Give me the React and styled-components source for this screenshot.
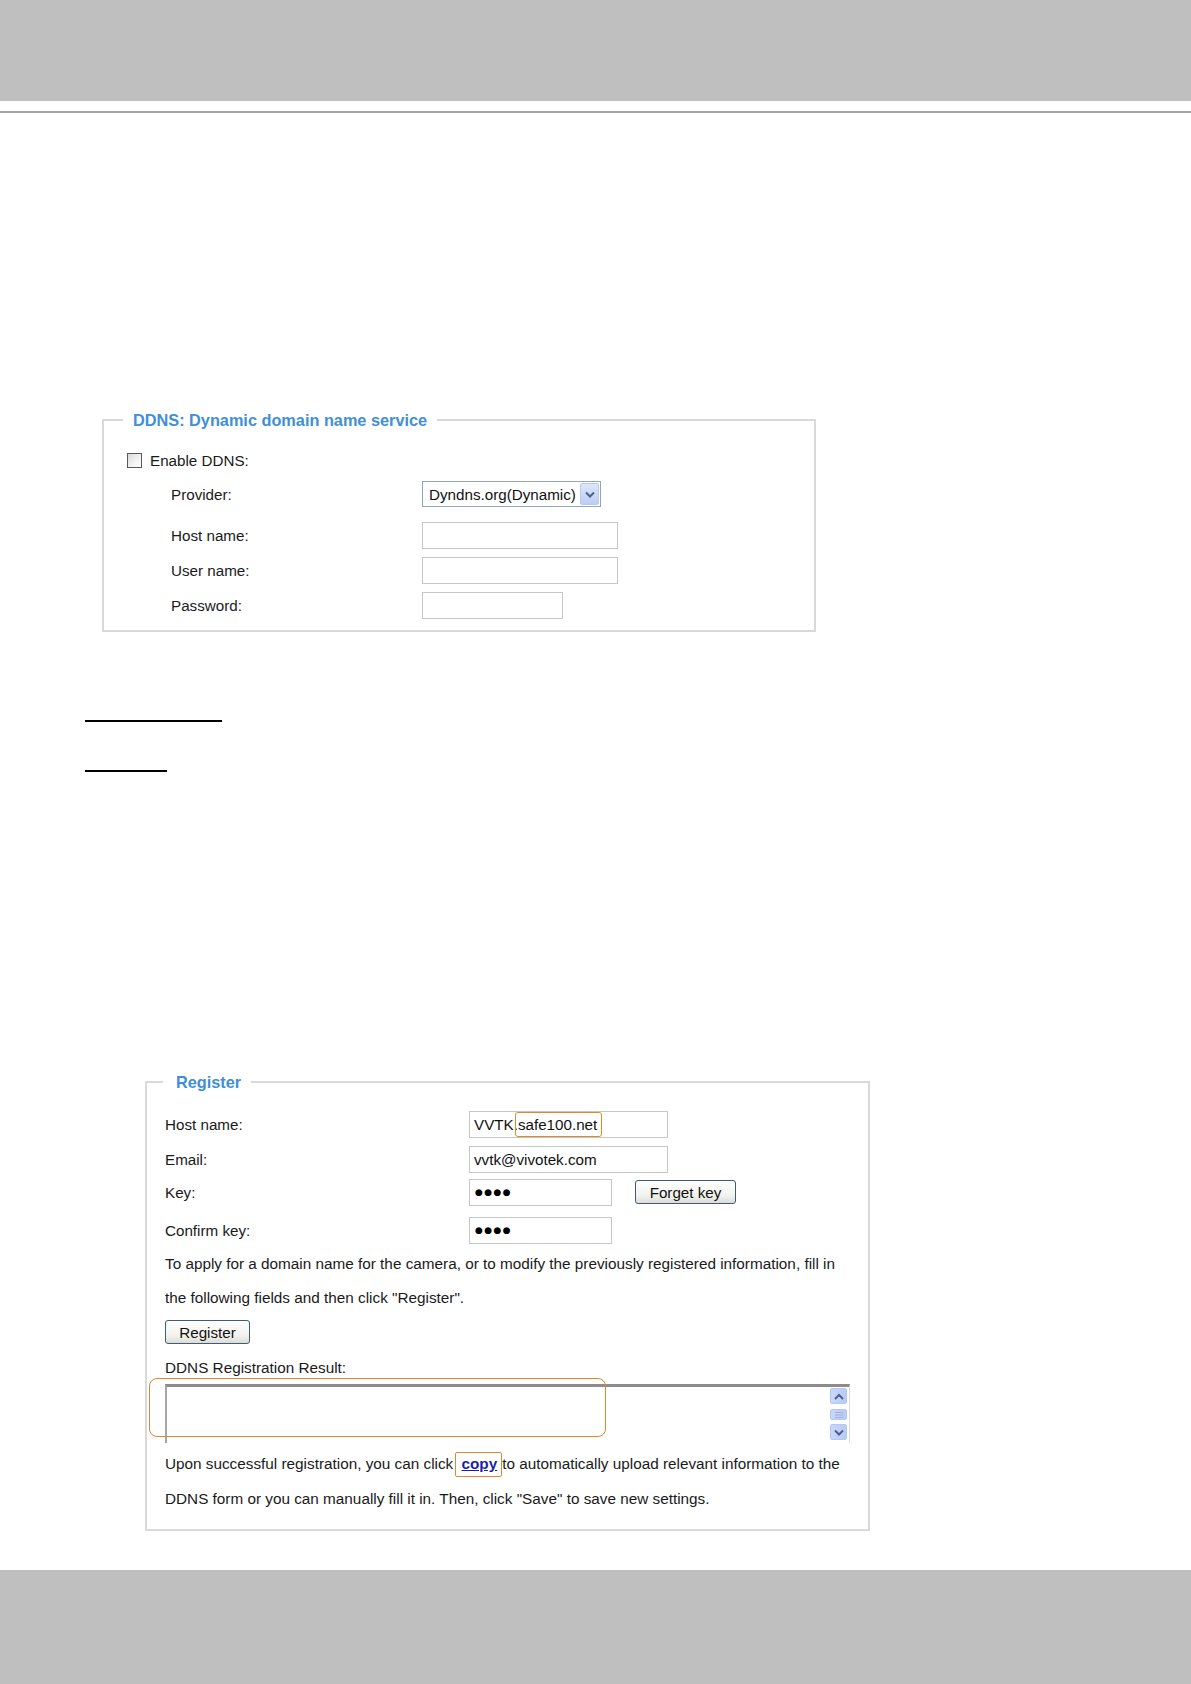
import React from 'react';
import styled, { createGlobalStyle } from 'styled-components';

const GlobalStyle = createGlobalStyle`
	html, body {
		margin: 0;
		padding: 0;
		background: #fff;
	}
	body {
		font-family: "Liberation Sans", Arial, sans-serif;
		color: #1a1a1a;
	}
`;

const Page = styled.div`
	width: 1191px;
	min-height: 1684px;
	display: flex;
	flex-direction: column;
	overflow: hidden;
`;

const Band = styled.div`
	height: ${p => p.$height}px;
	background: #bfbfbf;
	flex-shrink: 0;
`;

const Footer = styled(Band)`
	margin-top: auto;
`;

const Rule = styled.div`
	margin-top: 10px;
	border-top: 2px solid #a3a3a3;
`;

const Fieldset = styled.fieldset`
	box-sizing: border-box;
	min-width: 0;
	width: ${p => p.$width}px;
	margin: ${p => p.$top}px 0 0 ${p => p.$left}px;
	padding: ${p => p.$padTop}px 0 ${p => p.$padBottom}px 0;
	border: 2px solid #d9d9d9;
`;

const Legend = styled.legend`
	margin-left: ${p => p.$indent}px;
	padding: 0 10px 0 ${p => p.$padLeft}px;
	font-size: 16.3px;
	line-height: 20px;
	font-weight: bold;
	color: #3f8fd8;
`;

const CheckRow = styled.label`
	display: flex;
	align-items: center;
	gap: 8px;
	height: 34px;
	padding-left: 23px;
	font-size: 15.2px;
`;

const CheckBox = styled.span`
	box-sizing: border-box;
	width: 15px;
	height: 15px;
	border: 1px solid #55595e;
	background: linear-gradient(135deg, #d9d9d9 0%, #f4f4f4 60%, #ffffff 100%);
`;

const FieldRow = styled.div`
	display: grid;
	grid-template-columns: ${p => p.$labelWidth}px auto;
	align-items: center;
	height: ${p => p.$height}px;
	margin-top: ${p => p.$gap || 0}px;
	padding-left: ${p => p.$indent}px;
	font-size: 15.2px;
`;

const Cell = styled.div`
	display: flex;
	align-items: center;
	gap: 23px;
`;

const TextBox = styled.div`
	box-sizing: border-box;
	width: ${p => p.$width}px;
	height: 27px;
	border: 1px solid #c6c6c6;
	background: #fff;
	padding-left: 4px;
	display: flex;
	align-items: center;
	font-size: 15.2px;
	color: #111;
	white-space: nowrap;
`;

const Dots = styled.span`
	font-family: "DejaVu Sans", sans-serif;
	font-size: 9px;
	letter-spacing: 1.4px;
	color: #000;
	padding-left: 1px;
`;

const Marked = styled.span`
	display: inline-flex;
	align-items: center;
	box-sizing: border-box;
	height: 25px;
	margin-left: -3px;
	padding: 0 4px 0 2px;
	border: 1.5px solid #e0892c;
	border-radius: 3px;
`;

const SelectBox = styled.div`
	box-sizing: border-box;
	width: 179px;
	height: 26px;
	border: 1px solid #93a6ba;
	display: flex;
	align-items: center;
	justify-content: space-between;
	padding: 0 1px 0 6px;
	font-size: 15.2px;
	color: #111;
`;

const DropButton = styled.span`
	box-sizing: border-box;
	width: 19px;
	height: 22px;
	border: 1px solid #b9c9ea;
	border-radius: 2px;
	background: linear-gradient(#dde7fb, #bccdf3);
	display: flex;
	align-items: center;
	justify-content: center;
`;

const Button = styled.button`
	box-sizing: border-box;
	width: ${p => p.$width}px;
	height: 24px;
	padding: 0;
	border: 1px solid #3e5c7a;
	border-radius: 3px;
	background: linear-gradient(#ffffff, #f1f1ec 70%, #dcdcd4);
	font-family: "Liberation Sans", Arial, sans-serif;
	font-size: 15.2px;
	color: #111;
`;

const Underline = styled.div`
	width: ${p => p.$width}px;
	margin: ${p => p.$top}px 0 0 85px;
	border-bottom: 2px solid #000;
`;

const Text = styled.p`
	margin: ${p => p.$top || 0}px 0 0 0;
	padding-left: 18px;
	font-size: 15.3px;
	line-height: ${p => p.$lh}px;
	white-space: nowrap;
`;

const Indent = styled.div`
	padding-left: 18px;
	margin-top: ${p => p.$top}px;
`;

const ResultWrap = styled.div`
	position: relative;
	margin: 6px 0 0 18px;
	width: 685px;
`;

const ResultBox = styled.div`
	box-sizing: border-box;
	height: 59px;
	border-top: 3px solid #8c8c8c;
	border-left: 2px solid #a6a6a6;
	border-right: 1px solid #dadada;
	background: #fff;
	display: flex;
	justify-content: flex-end;
`;

const ScrollBar = styled.div`
	width: 17px;
	margin-right: 2px;
	padding-top: 1px;
	display: flex;
	flex-direction: column;
	gap: 4px;
`;

const ScrollButton = styled.span`
	box-sizing: border-box;
	height: ${p => p.$height}px;
	margin-top: ${p => p.$top || 0}px;
	border: 1px solid #b6c8f1;
	border-radius: 2px;
	background: linear-gradient(90deg, #c9d7fb, #b7cbf7);
	display: flex;
	align-items: center;
	justify-content: center;
`;

const Annotation = styled.span`
	position: absolute;
	left: -16px;
	top: -6px;
	width: 457px;
	height: 59px;
	border: 1.5px solid #e0892c;
	border-radius: 8px;
	box-sizing: border-box;
`;

const CopyMark = styled.span`
	display: inline-block;
	box-sizing: border-box;
	height: 25px;
	line-height: 22px;
	padding: 0 4px 0 5px;
	margin-left: -2px;
	border: 1.5px solid #e0892c;
	border-radius: 2px;
	vertical-align: middle;
`;

const CopyLink = styled.a`
	color: #1d1fa8;
	font-weight: bold;
	text-decoration: underline;
`;

const Chevron = ({ up, color = '#4f6286' }) => (
	<svg width="10" height="7" viewBox="0 0 10 7">
		<path
			d={up ? 'M1 6 L5 2 L9 6' : 'M1 1.5 L5 5.5 L9 1.5'}
			fill="none"
			stroke={color}
			strokeWidth="2"
		/>
	</svg>
);

const Grip = () => (
	<svg width="8" height="6" viewBox="0 0 8 6">
		<path d="M0 0.5 H8 M0 3 H8 M0 5.5 H8" stroke="#9fb3dc" strokeWidth="1" />
	</svg>
);

const DdnsForm = () => (
	<Fieldset $width={714} $top={297} $left={102} $padTop={13} $padBottom={7}>
		<Legend $indent={19} $padLeft={10}>DDNS: Dynamic domain name service</Legend>
		<CheckRow>
			<CheckBox />
			Enable DDNS:
		</CheckRow>
		<FieldRow $height={34} $indent={67} $labelWidth={251}>
			<span>Provider:</span>
			<SelectBox>
				Dyndns.org(Dynamic)
				<DropButton><Chevron /></DropButton>
			</SelectBox>
		</FieldRow>
		<FieldRow $height={35} $gap={7} $indent={67} $labelWidth={251}>
			<span>Host name:</span>
			<TextBox $width={196} />
		</FieldRow>
		<FieldRow $height={35} $indent={67} $labelWidth={251}>
			<span>User name:</span>
			<TextBox $width={196} />
		</FieldRow>
		<FieldRow $height={35} $indent={67} $labelWidth={251}>
			<span>Password:</span>
			<TextBox $width={141} />
		</FieldRow>
	</Fieldset>
);

const RegisterForm = () => (
	<Fieldset $width={725} $top={300} $left={145} $padTop={18} $padBottom={13}>
		<Legend $indent={16} $padLeft={13}>Register</Legend>
		<FieldRow $height={28} $indent={18} $labelWidth={304}>
			<span>Host name:</span>
			<TextBox $width={199}>
				VVTK.<Marked>safe100.net</Marked>
			</TextBox>
		</FieldRow>
		<FieldRow $height={28} $gap={7} $indent={18} $labelWidth={304}>
			<span>Email:</span>
			<TextBox $width={199}>vvtk@vivotek.com</TextBox>
		</FieldRow>
		<FieldRow $height={28} $gap={5} $indent={18} $labelWidth={304}>
			<span>Key:</span>
			<Cell>
				<TextBox $width={143}><Dots>●●●●</Dots></TextBox>
				<Button $width={101}>Forget key</Button>
			</Cell>
		</FieldRow>
		<FieldRow $height={28} $gap={10} $indent={18} $labelWidth={304}>
			<span>Confirm key:</span>
			<TextBox $width={143}><Dots>●●●●</Dots></TextBox>
		</FieldRow>
		<Text $lh={34} $top={3}>
			To apply for a domain name for the camera, or to modify the previously registered information, fill in
			<br />
			the following fields and then click "Register".
		</Text>
		<Indent $top={5}>
			<Button $width={85}>Register</Button>
		</Indent>
		<Text $lh={20} $top={14}>DDNS Registration Result:</Text>
		<ResultWrap>
			<ResultBox>
				<ScrollBar>
					<ScrollButton $height={16}><Chevron up /></ScrollButton>
					<ScrollButton $height={11} $top={1}><Grip /></ScrollButton>
					<ScrollButton $height={16}><Chevron /></ScrollButton>
				</ScrollBar>
			</ResultBox>
			<Annotation />
		</ResultWrap>
		<Text $lh={35} $top={3}>
			Upon successful registration, you can click <CopyMark><CopyLink>copy</CopyLink></CopyMark>to automatically upload relevant information to the
			<br />
			DDNS form or you can manually fill it in. Then, click "Save" to save new settings.
		</Text>
	</Fieldset>
);

const App = () => (
	<Page>
		<GlobalStyle />
		<Band $height={101} />
		<Rule />
		<DdnsForm />
		<Underline $width={137} $top={88} />
		<Underline $width={82} $top={48} />
		<RegisterForm />
		<Footer $height={114} />
	</Page>
);

export default App;
